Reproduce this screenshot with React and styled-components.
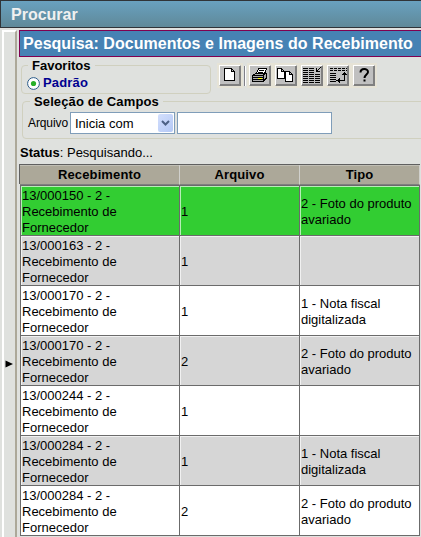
import React from "react";
import styled, { createGlobalStyle } from "styled-components";

const Global = createGlobalStyle`
  * { box-sizing: border-box; }
  html, body { margin: 0; height: 537px; overflow: hidden; background: #dfe1de; }
  body { font: 13px/16px "Liberation Sans", Arial, sans-serif; color: #000; }
`;

const Page = styled.div`
  width: 421px;
  height: 537px;
  overflow: hidden;
  display: flex;
  flex-direction: column;
`;
const WindowTitle = styled.header`
  flex: none;
  height: 28px;
  border: 1px solid #303438;
  border-right: 0;
  padding-left: 10px;
  background: linear-gradient(#69a1c0, #5f8999);
  color: #f0f0f0;
  font-size: 16px;
  font-weight: bold;
  line-height: 27px;
`;
const Body = styled.div`
  flex: 1;
  display: flex;
  padding: 2px 0 0 2px;
  gap: 2px;
`;
const Rail = styled.div`
  flex: none;
  width: 15px;
  height: 520px;
  border: 2px solid #fff;
  border-right-color: #aca899;
  border-bottom: 0;
  padding: 324px 0 0 1px;
`;
const Main = styled.main`
  flex: none;
  width: 410px;
  display: flex;
  flex-direction: column;
`;
const Heading = styled.h1`
  margin: 0;
  height: 27px;
  border: 1px solid #800050;
  padding-left: 3px;
  background: #4682b4;
  color: #fff;
  font-size: 16px;
  line-height: 26px;
  white-space: nowrap;
  letter-spacing: 0.03px;
`;
const TopRow = styled.div`
  display: flex;
  height: 37px;
  padding: 1px 0 0 2px;
`;
const Group = styled.fieldset`
  margin: 0;
  min-width: 0;
  width: ${(p) => p.$width}px;
  height: ${(p) => p.$height}px;
  border: 1px solid #d0d0bf;
  border-radius: 4px;
  padding: 0 0 0 5px;
`;
const SearchGroup = styled(Group)`
  margin-left: 3px;
`;
const Legend = styled.legend`
  margin-left: ${(p) => p.$shift}px;
  padding: 0 4px;
  height: 15px;
  line-height: 15px;
  font-weight: bold;
  letter-spacing: ${(p) => p.$track || 0}px;
`;
const RadioLabel = styled.label`
  display: flex;
  align-items: center;
  gap: 3px;
  height: 20px;
  color: #000090;
  font-weight: bold;
  letter-spacing: 0.15px;
`;
const Tools = styled.div`
  display: flex;
  height: 25px;
  margin: 5px 0 0 6px;
`;
const ToolCell = styled.div`
  width: 26px;
  height: 25px;
  padding: 2px;
  background: #e6e3d6;
`;
const ToolButton = styled.button`
  display: block;
  width: 22px;
  height: 21px;
  padding: 0;
  border: 1px solid;
  border-color: #fff #808080 #808080 #fff;
  box-shadow: inset -1px -1px #808080;
  background: #c0c0c0;
  svg { display: block; }
`;
const Separator = styled.i`
  width: 3px;
  height: 20px;
  margin: 3px 0 0 1px;
  border-left: 1px solid #808088;
  box-shadow: inset 1px 0 #fff;
`;
const Fields = styled.div`
  display: flex;
  align-items: center;
  height: 22px;
  margin-top: 3px;
`;
const FieldLabel = styled.span`
  width: 42px;
  font-size: 12px;
  letter-spacing: -0.1px;
`;
const Select = styled.div`
  display: flex;
  justify-content: space-between;
  width: 105px;
  height: 22px;
  margin-right: 2px;
  border: 1px solid #7f9db9;
  padding: 1px 1px 1px 4px;
  background: #fff;
  line-height: 19px;
`;
const Arrow = styled.span`
  display: grid;
  place-items: center;
  width: 15px;
  height: 18px;
  border-radius: 2px;
  background: linear-gradient(135deg, #d3dffd, #b4c8f5);
`;
const TextInput = styled.input`
  width: 155px;
  height: 22px;
  border: 1px solid #7f9db9;
  background: #fff;
  padding: 0 3px;
`;
const Status = styled.p`
  margin: 0;
  height: 25px;
  padding: 6px 0 0 1px;
`;
const HeadRow = styled.div`
  display: grid;
  grid-template-columns: 160px 120px 120px;
  width: 401px;
  height: 20px;
  border-top: 1px solid #606060;
  border-left: 1px solid #606060;
`;
const HeadCell = styled.div`
  border-right: 1px solid #d0d0cc;
  border-bottom: 1px solid #808080;
  background: #aca899;
  box-shadow: inset 0 1px #c0beb4;
  text-align: center;
  font-weight: bold;
  letter-spacing: 0.12px;
  line-height: 19px;
`;
const Rows = styled.div`
  margin: 1px 0 0 1px;
  width: 400px;
  border: 1px solid #6b6b6b;
  border-bottom: 0;
`;
const Row = styled.div`
  display: grid;
  grid-template-columns: 159px 120px 119px;
  grid-template-rows: 50px;
  height: 50px;
  background: ${(p) => p.$fill};
`;
const Cell = styled.div`
  display: flex;
  align-items: center;
  padding: 3px 20px 0 1px;
  border-right: 1px solid #6b6b6b;
  border-bottom: 1px solid #6b6b6b;
  box-shadow: inset 1px 1px rgba(255, 255, 255, 0.65);
  &:last-child { padding-right: 0; border-right: 0; }
`;

const Icon = ({ children }) => (
  <svg width="20" height="19" viewBox="0 0 20 19" fill="none" stroke="#000" shapeRendering="crispEdges">{children}</svg>
);
const NewIcon = () => (
  <Icon><path d="M4.5 2.5h7l3 3v9h-10zM11.5 2.5v3h3" fill="#fff" /></Icon>
);
const PrintIcon = () => (
  <Icon>
    <path d="M6.5 7.5l2-5h8l-2 5z" fill="#fff" />
    <path d="M9 4.5h5M8 6.5h5" />
    <path d="M2.5 9.5l3-2h11v5l-3 3h-11z" fill="#aaa" />
    <path d="M3 9.5h10l3-3M13.5 9v6M3 11.5h10M3 13.5h11M4 15.5h9l3-3" />
    <path d="M8 12.5h4" stroke="#ff0" />
  </Icon>
);
const CopyIcon = () => (
  <Icon>
    <path d="M1.5 2.5h4l3 3v7h-7zM5.5 2.5v3h3" fill="#fff" />
    <path d="M9.5 5.5h4l3 3v7h-7zM13.5 5.5v3h3" fill="#fff" />
  </Icon>
);
const ListIcon = () => (
  <Icon>
    <path d="M1 2.5h5m1 0h5M1 4.5h5m1 0h5M1 6.5h5m1 0h5M1 8.5h5m1 0h5m1 0h5M1 10.5h5m1 0h5m1 0h5M1 12.5h5m1 0h5m1 0h5M1 14.5h5m1 0h5m1 0h5M1 16.5h5m1 0h5m1 0h5" />
    <path d="M19 1l-4 4M14.5 2v4M14 5.5h4" />
  </Icon>
);
const SwapIcon = () => (
  <Icon>
    <path d="M2 2.5h17M2 4.5h17" strokeDasharray="3 1" />
    <path d="M2 7.5h6M2 9.5h6M2 11.5h6M2 13.5h6M2 15.5h6" />
    <path d="M16.5 7v7.5H10" />
    <path d="M16.5 5.5l3 3.5h-6zM8.5 14.5l3.5-3v6z" fill="#000" stroke="none" />
  </Icon>
);
const HelpIcon = () => (
  <Icon>
    <path d="M6.500 6.500C6.500 2 14 2 14 6C14 8.500 10.500 8.500 10.500 12M10.500 13.500v2" strokeWidth="2" shapeRendering="auto" />
  </Icon>
);

const tools = [
  ["Imprimir", PrintIcon],
  ["Copiar", CopyIcon],
  ["Lista", ListIcon],
  ["Inverter", SwapIcon],
  ["Ajuda", HelpIcon],
];
const FOTO = "2 - Foto do produto avariado";
const NOTA = "1 - Nota fiscal digitalizada";
const records = [
  ["13/000150", "1", FOTO, "#32cd32"],
  ["13/000163", "1", "", "#d6d6d6"],
  ["13/000170", "1", NOTA, "#fff"],
  ["13/000170", "2", FOTO, "#d6d6d6"],
  ["13/000244", "1", "", "#fff"],
  ["13/000284", "1", NOTA, "#d6d6d6"],
  ["13/000284", "2", FOTO, "#fff"],
];

export default function App() {
  return (
    <Page>
      <Global />
      <WindowTitle>Procurar</WindowTitle>
      <Body>
        <Rail>
          <svg width="8" height="8" viewBox="0 0 8 8"><path d="M0.5 0.5L8 4L0.5 7.5z" /></svg>
        </Rail>
        <Main>
          <Heading>Pesquisa: Documentos e Imagens do Recebimento</Heading>
          <TopRow>
            <Group $width={190} $height={36}>
              <Legend $shift={1}>Favoritos</Legend>
              <RadioLabel>
                <svg width="13" height="13" viewBox="0 0 13 13">
                  <circle cx="6.5" cy="6.5" r="5.9" fill="#fff" stroke="#2b5b89" />
                  <circle cx="6.5" cy="6.5" r="2.6" fill="#28b028" />
                </svg>
                Padrão
              </RadioLabel>
            </Group>
            <Tools>
              <ToolCell><ToolButton aria-label="Novo"><NewIcon /></ToolButton></ToolCell>
              <Separator />
              {tools.map(([name, Glyph]) => (
                <ToolCell key={name}><ToolButton aria-label={name}><Glyph /></ToolButton></ToolCell>
              ))}
            </Tools>
          </TopRow>
          <SearchGroup $width={420} $height={45}>
            <Legend $shift={2} $track={0.12}>Seleção de Campos</Legend>
            <Fields>
              <FieldLabel>Arquivo</FieldLabel>
              <Select>
                Inicia com
                <Arrow>
                  <svg width="9" height="7" viewBox="0 0 9 7"><path d="M1 1l3.5 3.5L8 1" fill="none" stroke="#4d6185" strokeWidth="2" /></svg>
                </Arrow>
              </Select>
              <TextInput aria-label="Arquivo" />
            </Fields>
          </SearchGroup>
          <Status><b>Status</b>: Pesquisando...</Status>
          <HeadRow>
            <HeadCell>Recebimento</HeadCell>
            <HeadCell>Arquivo</HeadCell>
            <HeadCell>Tipo</HeadCell>
          </HeadRow>
          <Rows>
            {records.map(([code, file, type, fill], i) => (
              <Row key={i} $fill={fill}>
                <Cell>{code} - 2 - Recebimento de Fornecedor</Cell>
                <Cell>{file}</Cell>
                <Cell>{type}</Cell>
              </Row>
            ))}
          </Rows>
        </Main>
      </Body>
    </Page>
  );
}
